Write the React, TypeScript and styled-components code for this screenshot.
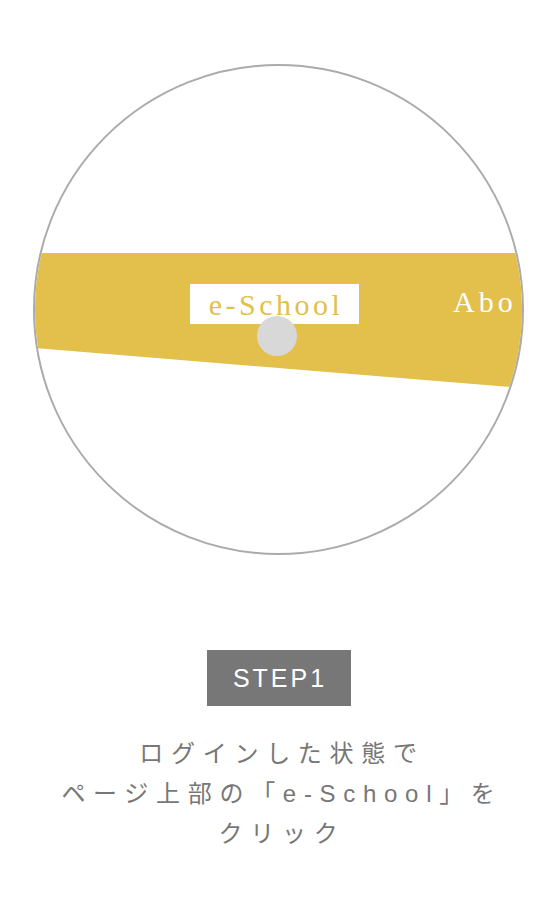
import React, { FC } from 'react';
import styled, { createGlobalStyle } from 'styled-components';

const GOLD = '#e2c04b';

const GlobalStyle = createGlobalStyle`
  html, body {
    margin: 0;
    padding: 0;
    background: #ffffff;
  }
`;

const Page = styled.div`
  display: flex;
  flex-direction: column;
  align-items: center;
  width: 557px;
  padding-top: 64px;
  font-family: 'Liberation Sans', 'Noto Sans CJK JP', sans-serif;
`;

// illustration of the site header, zoomed in
const Circle = styled.div`
  position: relative;
  width: 491px;
  height: 491px;
  box-sizing: border-box;
  border: 2px solid #ababab;
  border-radius: 50%;
  overflow: hidden;
  background: #ffffff;
`;

const Band = styled.div`
  position: absolute;
  inset: 0;
  background: ${GOLD};
  clip-path: polygon(0 187px, 100% 187px, 100% 322px, 0 282px);
`;

const MenuLabel = styled.div`
  position: absolute;
  left: 155px;
  top: 218px;
  width: 169px;
  height: 40px;
  box-sizing: border-box;
  display: flex;
  align-items: center;
  justify-content: center;
  background: #ffffff;
  color: ${GOLD};
  font-family: 'Liberation Serif', serif;
  font-size: 30px;
  letter-spacing: 3.5px;
  padding: 2px 0 0 3px;
`;

const MenuItem = styled.div`
  position: absolute;
  left: 418px;
  top: 219px;
  color: #ffffff;
  font-family: 'Liberation Serif', serif;
  font-size: 30px;
  letter-spacing: 4px;
  white-space: nowrap;
`;

const Pointer = styled.div`
  position: absolute;
  left: 222px;
  top: 250px;
  width: 40px;
  height: 40px;
  border-radius: 50%;
  background: #d8d8d8;
`;

const StepBadge = styled.div`
  margin-top: 95px;
  width: 144px;
  height: 56px;
  display: flex;
  align-items: center;
  justify-content: center;
  background: #777777;
  color: #ffffff;
  font-size: 25px;
  letter-spacing: 3px;
  padding-left: 3px;
  box-sizing: border-box;
`;

const Description = styled.p`
  margin: 28px 0 0;
  text-align: center;
  color: #777777;
  font-size: 24px;
  line-height: 40px;
  letter-spacing: 7.7px;
  padding-left: 7px;
`;

const App: FC = () => (
  <>
    <GlobalStyle />
    <Page>
      <Circle>
        <Band />
        <MenuLabel>e-School</MenuLabel>
        <MenuItem>Abo</MenuItem>
        <Pointer />
      </Circle>
      <StepBadge>STEP1</StepBadge>
      <Description>
        ログインした状態で
        <br />
        ページ上部の「e-School」を
        <br />
        クリック
      </Description>
    </Page>
  </>
);

export default App;
